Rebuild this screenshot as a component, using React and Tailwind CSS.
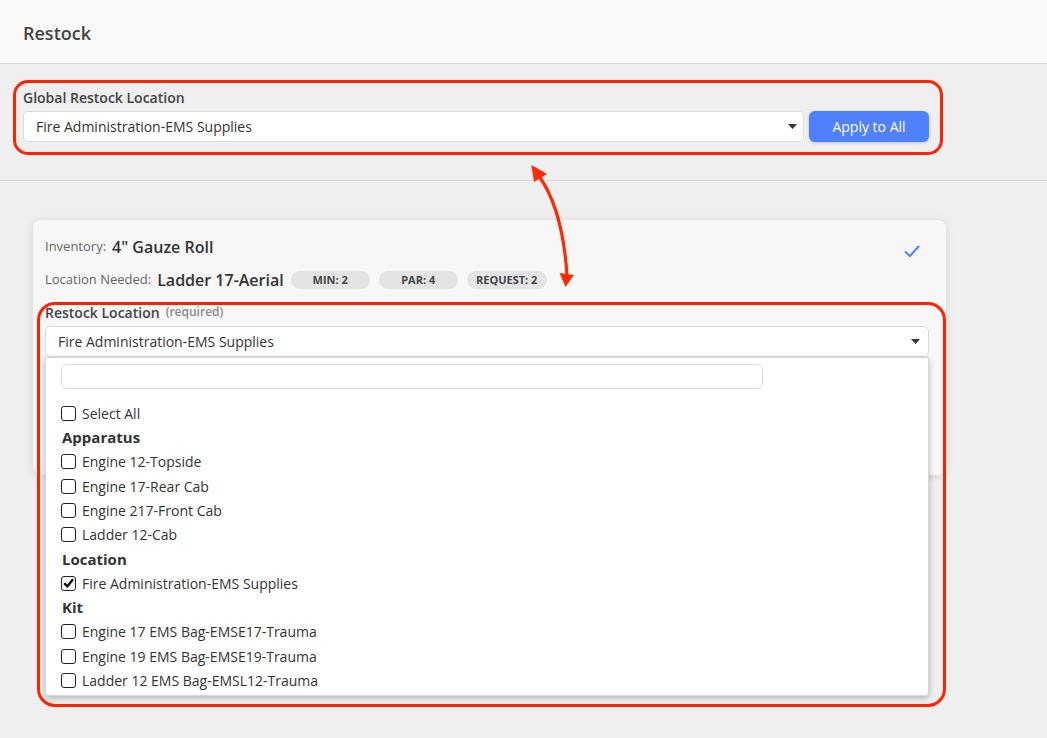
import React from "react";

function Caret() {
  return (
    <svg width="9" height="5" viewBox="0 0 9 5" className="shrink-0">
      <path d="M0 0 L9 0 L4.5 5 Z" fill="#333" />
    </svg>
  );
}

function Box({ checked }) {
  return (
    <div className="w-[15px] h-[15px] rounded-[3px] border-[1.5px] border-[#222] bg-white flex items-center justify-center shrink-0">
      {checked && (
        <svg width="11" height="11" viewBox="0 0 12 12">
          <path d="M2 6.5 L4.8 9.2 L10.2 2.2" fill="none" stroke="#111" strokeWidth="2.6" strokeLinecap="round" strokeLinejoin="round" />
        </svg>
      )}
    </div>
  );
}

function Item({ label, checked }) {
  return (
    <div className="h-[24.3px] flex items-center gap-[6px] pl-[15px]">
      <Box checked={checked} />
      <span className="text-[14px] text-[#333]">{label}</span>
    </div>
  );
}

function Group({ label }) {
  return (
    <div className="h-[24.3px] flex items-center pl-[16px] text-[15px] font-bold text-[#333]">{label}</div>
  );
}

function Pill({ children, w }) {
  return (
    <span className={`h-[18px] ${w} rounded-full bg-[#e4e4e4] text-[11px] font-bold text-[#444] flex items-center justify-center`}>
      {children}
    </span>
  );
}

export default function App() {
  return (
    <div className="relative w-[1047px] h-[738px] bg-[#efefef] overflow-hidden font-['Open_Sans',sans-serif] text-[#333]">
      <div className="h-[64px] bg-[#f9f9f9] border-b border-[#dadada] px-[23px] pt-[3px] flex items-center">
        <h1 className="text-[18px] font-semibold text-[#444]">Restock</h1>
      </div>

      <div className="px-[23px] pt-[23px] pb-[38px] border-b border-[#dadada]">
        <div className="h-[20px] flex items-center text-[14px] font-semibold text-[#444]">Global Restock Location</div>
        <div className="mt-[4px] w-[906px] flex gap-[5px]">
          <div className="flex-1 h-[31px] bg-white border border-[#dcdcdc] rounded-[4px] pl-[12px] pr-[6px] flex items-center justify-between">
            <span className="text-[14px] text-[#333]">Fire Administration-EMS Supplies</span>
            <Caret />
          </div>
          <button className="w-[120px] h-[31px] rounded-[6px] bg-[#4f80fe] text-white text-[14px] shadow-[0_1px_3px_rgba(0,0,0,0.2)]">
            Apply to All
          </button>
        </div>
      </div>

      <div className="pt-[39px] pl-[33px]">
        <div className="relative w-[913px] h-[255px] bg-[#f7f7f7] rounded-[8px] shadow-[0_1px_8px_rgba(0,0,0,0.12)] pl-[12px] pr-[17px] pt-[16px]">
          <svg className="absolute right-[26px] top-[25px]" width="16" height="13" viewBox="0 0 16 13">
            <path d="M1.5 7 L6 11 L14.5 1.5" fill="none" stroke="#4f80fe" strokeWidth="2" strokeLinecap="round" strokeLinejoin="round" />
          </svg>
          <div className="h-[22px] flex items-center gap-[6px]">
            <span className="text-[13px] text-[#666]">Inventory:</span>
            <span className="text-[16px] font-semibold text-[#333]">4" Gauze Roll</span>
          </div>
          <div className="mt-[10px] h-[24px] flex items-center">
            <span className="text-[13px] text-[#666]">Location Needed:</span>
            <span className="ml-[6px] text-[16px] font-semibold text-[#333]">Ladder 17-Aerial</span>
            <div className="ml-[7px] flex gap-[9px]">
              <Pill w="w-[79px]">MIN: 2</Pill>
              <Pill w="w-[79px]">PAR: 4</Pill>
              <Pill w="w-[80px]">REQUEST: 2</Pill>
            </div>
          </div>
          <div className="mt-[10px] h-[20px] flex items-center gap-[6px]">
            <span className="text-[14px] font-semibold text-[#444]">Restock Location</span>
            <span className="text-[12px] font-semibold text-[#8a8a8a]">(required)</span>
          </div>
          <div className="relative mt-[4px]">
            <div className="h-[31px] bg-white border border-[#dcdcdc] rounded-[5px] pl-[12px] pr-[8px] flex items-center justify-between">
              <span className="text-[14px] text-[#333]">Fire Administration-EMS Supplies</span>
              <Caret />
            </div>
            <div className="absolute left-0 right-0 top-[31px] h-[339px] bg-white border border-[#d8d8d8] rounded-b-[4px] shadow-[0_2px_6px_rgba(0,0,0,0.25)] z-10">
              <div className="ml-[15px] mt-[6px] w-[702px] h-[25px] border border-[#dcdcdc] rounded-[6px] bg-white" />
              <div className="mt-[12px]">
                <Item label="Select All" />
                <Group label="Apparatus" />
                <Item label="Engine 12-Topside" />
                <Item label="Engine 17-Rear Cab" />
                <Item label="Engine 217-Front Cab" />
                <Item label="Ladder 12-Cab" />
                <Group label="Location" />
                <Item label="Fire Administration-EMS Supplies" checked />
                <Group label="Kit" />
                <Item label="Engine 17 EMS Bag-EMSE17-Trauma" />
                <Item label="Engine 19 EMS Bag-EMSE19-Trauma" />
                <Item label="Ladder 12 EMS Bag-EMSL12-Trauma" />
              </div>
            </div>
          </div>
        </div>
      </div>

      {/* annotation outlines */}
      <div className="absolute left-[13px] top-[80px] w-[930px] h-[75px] border-[3px] border-[#ff2200] rounded-[15px] pointer-events-none" />
      <div className="absolute left-[37px] top-[302px] w-[909px] h-[405px] border-[3px] border-[#ff2200] rounded-[18px] pointer-events-none z-20" />
      <svg className="absolute left-0 top-0 pointer-events-none z-20" width="1047" height="738" viewBox="0 0 1047 738">
        <path d="M539 176 Q563 210 567 276" fill="none" stroke="#ff2a00" strokeWidth="3.2" />
        <path d="M531.5 165 L534 182 L547 174 Z" fill="#ff2a00" />
        <path d="M565.5 287 L559.5 273 L574 275 Z" fill="#ff2a00" />
      </svg>
    </div>
  );
}
